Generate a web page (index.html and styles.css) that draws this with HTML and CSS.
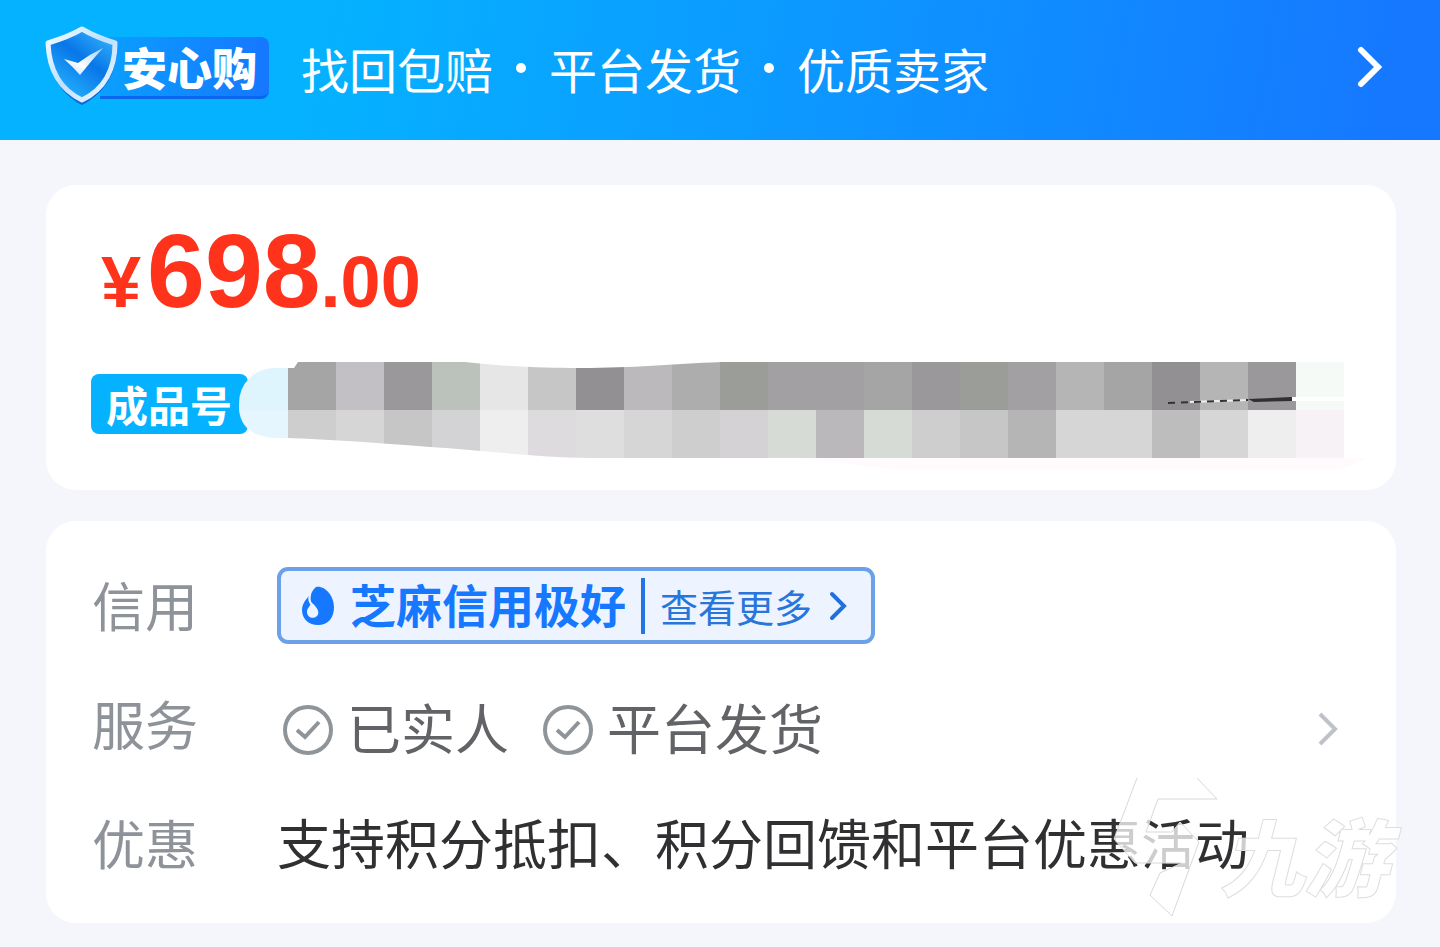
FILE: index.html
```html
<!doctype html>
<html lang="zh-CN">
	<head>
		<meta charset="UTF-8" />
		<meta name="viewport" content="width=device-width, initial-scale=1.0" />
		<title>安心购</title>
		<link rel="stylesheet" href="styles.css">
	</head>
	<body>
		<header class="banner">
			<div class="brand">
				<svg class="shield" viewBox="0 0 76 82" aria-hidden="true">
					<defs>
						<linearGradient id="rim" x1="0" y1="0" x2="1" y2="1">
							<stop offset="0" stop-color="#f4fdff" />
							<stop offset="0.5" stop-color="#bfe0ff" />
							<stop offset="1" stop-color="#f2faff" />
						</linearGradient>
						<linearGradient id="face" x1="1" y1="0" x2="0.3" y2="1">
							<stop offset="0" stop-color="#3cc0ff" />
							<stop offset="0.5" stop-color="#0876e8" />
							<stop offset="1" stop-color="#26b4ff" />
						</linearGradient>
						<linearGradient id="tick" x1="1" y1="0" x2="0" y2="1">
							<stop offset="0" stop-color="#9bd2ff" />
							<stop offset="0.6" stop-color="#ffffff" />
							<stop offset="1" stop-color="#a9d8ff" />
						</linearGradient>
					</defs>
					<path d="M38 5C48 11 59 15 73 20C73 47 62 68 38 80C15 68 4 47 3 20C16 17 28 11 38 5Z" fill="#0867df" />
					<path d="M38 4C48 10 58 14 71 18C71 43 61 64 38 75C15 64 5 43 4 18C17 14 28 10 38 4Z" fill="url(#face)" stroke="url(#rim)" stroke-width="5" stroke-linejoin="round" />
					<path d="M20 34L34 38Q46 29 59 23Q47 36 36 50Q29 42 20 34Z" fill="url(#tick)" />
				</svg>
				<span class="brand-name">安心购</span>
			</div>
			<div class="promises">
				<span>找回包赔</span>
				<i class="dot"></i>
				<span>平台发货</span>
				<i class="dot"></i>
				<span>优质卖家</span>
			</div>
			<a class="banner-link" href="#" aria-label="安心购">
				<svg width="30" height="44" viewBox="0 0 30 44" aria-hidden="true">
					<path d="M5 5L22 22L5 39" fill="none" stroke="#fff" stroke-width="6" stroke-linecap="round" />
				</svg>
			</a>
		</header>

		<main>
			<section class="card goods">
				<div class="price"><span class="yen">¥</span><span class="whole">698</span><span class="cents">.00</span></div>
				<div class="title">
					<span class="tag">成品号</span>
					<svg class="mosaic" viewBox="239 362 1128 108" aria-hidden="true">
						<defs>
							<clipPath id="brush">
								<path d="M288 368H294L298 362H465C510 367 545 368 580 368C635 368 670 364 722 362H1344V458H590C530 457 480 450 430 447C380 443 340 440 288 438Z" />
							</clipPath>
						</defs>
						<path d="M288 368H274A35 35 0 0 0 239 403V410H288Z" fill="#def5fe" />
						<path d="M288 438H274Q242 436 239 410H288Z" fill="#e5f6ff" />
						<path d="M800 458H1366Q1352 466 1338 470H900Z" fill="#fffafe" />
						<g id="cells" clip-path="url(#brush)"></g>
						<path d="M1190 402L1248 400" stroke="#eee" stroke-width="2" />
						<path d="M1168 403L1248 400" stroke="#333" stroke-width="2" stroke-dasharray="7 6" />
						<path d="M1248 399L1292 397V401L1254 402Z" fill="#302f32" />
						<path d="M1292 397H1344V401H1292Z" fill="#fff" />
					</svg>
				</div>
			</section>

			<section class="card details">
				<div class="row">
					<span class="label">信用</span>
					<a class="credit" href="#">
						<svg width="34" height="40" viewBox="0 0 34 40" aria-hidden="true">
							<path d="M15 1C23-1 33 9 33 21C33 32 27 39 17 39C8 39 1 33 1 24C1 18 5 13 9 9C7 14 9 18 13 21C17 24 18 28 15 31C12 33 7 31 7 26C7 22 10 20 11 18C8 14 9 6 15 1Z" fill="#1677ff" />
							<path d="M9 9C7 14 9 17 12 20" fill="none" stroke="#edf4ff" stroke-width="2" />
							<path d="M11 17C17 22 19 27 16 30C12 34 6 31 6 26C6 22 9 20 11 17Z" fill="#edf4ff" />
						</svg>
						<b>芝麻信用极好</b>
						<span class="more">查看更多</span>
						<svg class="more-arrow" width="18" height="30" viewBox="0 0 18 30" aria-hidden="true">
							<path d="M3 3L15 15L3 27" fill="none" stroke="#1f70dd" stroke-width="4" stroke-linecap="round" />
						</svg>
					</a>
				</div>
				<div class="row">
					<span class="label">服务</span>
					<span class="service">
						<svg width="50" height="50" viewBox="0 0 50 50" aria-hidden="true">
							<circle cx="25" cy="25" r="23" />
							<path d="M14 25L22 32L36 17" />
						</svg>
						已实人
					</span>
					<span class="service">
						<svg width="50" height="50" viewBox="0 0 50 50" aria-hidden="true">
							<circle cx="25" cy="25" r="23" />
							<path d="M14 25L22 32L36 17" />
						</svg>
						平台发货
					</span>
					<a class="row-link" href="#" aria-label="服务">
						<svg width="24" height="38" viewBox="0 0 24 38" aria-hidden="true">
							<path d="M4 4L19 19L4 34" fill="none" stroke="#bfc2c8" stroke-width="4" />
						</svg>
					</a>
				</div>
				<div class="row">
					<span class="label">优惠</span>
					<span class="discount">支持积分抵扣、积分回馈和平台优惠活动</span>
				</div>
				<div class="watermark" aria-hidden="true">
					<svg width="108" height="140" viewBox="1112 777 108 140">
						<path d="M1137 778L1114 839L1135 863H1182L1160 873L1150 895L1172 916L1199 842L1180 822L1172 832H1146L1158 799H1217L1197 778" fill="rgba(255,255,255,0.76)" stroke="#d8d8d8" />
					</svg>
					<span>九游</span>
				</div>
			</section>
		</main>

		<script>
			const rows = [
				['a5a5a5', 'c2c0c4', '9a989b', 'bbc2bb', 'e6e6e6', 'c6c6c6', '929093', 'bbb9bc', 'adadad', '9a9d98', 'a3a0a4', 'a3a0a4', 'a5a5a5', '9a989b', '9a9d98', 'a3a0a4', 'b5b5b5', 'a5a5a5', '929093', 'b5b5b5', '9a989b', 'f5faf7'],
				['cecece', 'd6d6d6', 'c6c6c6', 'd3d2d4', 'eeeeee', 'dddbde', 'dedede', 'd6d6d6', 'cecece', 'd5d2d6', 'd6dbd5', 'bbb8bc', 'd6dbd5', 'cecece', 'c6c6c6', 'b5b5b5', 'd6d6d6', 'd6d6d6', 'bdbdbd', 'd6d6d6', 'eeeeee', 'f7f2f6'],
			];
			const cells = document.getElementById('cells');

			rows.forEach((colors, y) => {
				colors.forEach((color, x) => {
					const cell = document.createElementNS('http://www.w3.org/2000/svg', 'rect');
					cell.setAttribute('x', 288 + x * 48);
					cell.setAttribute('y', 362 + y * 48);
					cell.setAttribute('width', 48);
					cell.setAttribute('height', 48);
					cell.setAttribute('fill', `#${color}`);
					cells.appendChild(cell);
				});
			});
		</script>
	</body>
</html>
```
FILE: styles.css
```css
body {
	margin: 0;
	background-color: #f4f6fc;
	font-family: "Noto Sans CJK SC", sans-serif;
}
a {
	color: inherit;
	text-decoration: none;
}
svg {
	display: block;
	flex-shrink: 0;
}
.banner {
	display: flex;
	align-items: center;
	height: 140px;
	padding: 0 54px 0 44px;
	background: linear-gradient(100deg, #05b2ff 22%, #1677ff 98%);
	color: #fff;
}
.brand {
	display: flex;
	align-items: center;
	margin-bottom: 8px;
}
.shield {
	position: relative;
	width: 76px;
	height: 82px;
}
.brand-name {
	margin: 4px 0 0 -20px;
	padding: 0 12px 0 22px;
	border-bottom: 3px solid #0867ee;
	border-radius: 0 8px 8px 0;
	background: linear-gradient(90deg, #0aa0ff, #1677ff);
	font-size: 45px;
	font-weight: 900;
	line-height: 59px;
}
.promises {
	display: flex;
	align-items: center;
	gap: 23px;
	margin: 0 0 4px 32px;
	font-size: 48px;
	line-height: 64px;
}
.dot {
	width: 10px;
	height: 10px;
	border-radius: 50%;
	background-color: #fff;
}
.banner-link {
	margin: 0 0 6px auto;
}
main {
	display: flex;
	flex-direction: column;
	gap: 31px;
	padding: 45px 44px 24px 46px;
}
.card {
	position: relative;
	border-radius: 30px;
	background-color: #fff;
}
.goods {
	padding: 32px 45px 20px;
}
.price {
	display: flex;
	align-items: baseline;
	height: 108px;
	padding-left: 10px;
	color: #ff321b;
	font-family: "Liberation Sans", sans-serif;
	font-weight: 700;
	line-height: 108px;
}
.yen,
.cents {
	font-size: 72px;
}
.whole {
	margin-left: 6px;
	font-size: 104px;
}
.title {
	display: flex;
	align-items: flex-start;
	margin-top: 37px;
}
.tag {
	flex-shrink: 0;
	margin-top: 12px;
	padding: 0 16px 0 15px;
	border-radius: 8px;
	background-color: #05b2ff;
	color: #fff;
	font-size: 42px;
	font-weight: 700;
	line-height: 60px;
}
.mosaic {
	width: 1128px;
	height: 108px;
	margin: 0 -16px 0 -9px;
}
.details {
	padding: 23px 48px 22px 46px;
}
.row {
	display: flex;
	align-items: center;
	height: 119px;
	font-size: 54px;
	line-height: 80px;
}
.label {
	flex-shrink: 0;
	width: 185px;
	color: #8e9299;
	font-size: 53px;
}
.credit {
	display: flex;
	align-items: center;
	box-sizing: border-box;
	height: 77px;
	margin-top: 4px;
	padding: 0 24px 0 20px;
	border: 4px solid #6ba1e8;
	border-radius: 11px;
	background-color: #edf4ff;
	color: #1677ff;
	line-height: 56px;
}
.credit b {
	margin-left: 15px;
	padding: 0 15px 6px 0;
	border-right: 4px solid #2475e4;
	font-size: 46px;
	line-height: 50px;
}
.more {
	margin-left: 15px;
	color: #2876db;
	font-size: 38px;
}
.more-arrow {
	margin-left: 17px;
}
.service {
	display: flex;
	align-items: center;
	gap: 14px;
	margin-left: 6px;
	padding-top: 8px;
	color: #626366;
}
.service + .service {
	margin-left: 34px;
}
.service svg {
	margin-top: 6px;
	fill: none;
	stroke: #8f9499;
	stroke-width: 4;
}
.row-link {
	margin: 12px 8px 0 auto;
}
.discount {
	color: #303033;
	white-space: nowrap;
}
.watermark {
	position: absolute;
	right: 8px;
	bottom: 6px;
	display: flex;
	align-items: center;
	color: rgba(255, 255, 255, 0.76);
	font-size: 84px;
	font-style: italic;
	font-weight: 900;
	line-height: 100px;
	-webkit-text-stroke: 1px #dedede;
}
.watermark span {
	padding-top: 14px;
}
```
